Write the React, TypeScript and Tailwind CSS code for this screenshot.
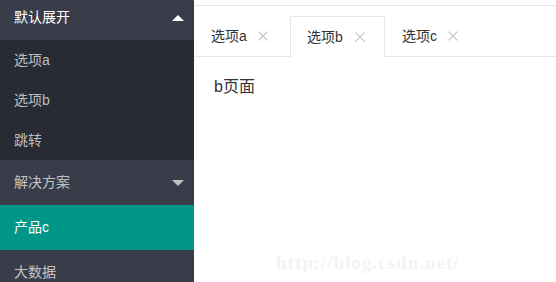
import React from 'react';

const FONT = { fontFamily: '"Liberation Sans", "Noto Sans CJK SC", sans-serif' };

const SUB_ITEMS = ['选项a', '选项b', '跳转'];
const TABS = [
  { id: 'a', label: '选项a' },
  { id: 'b', label: '选项b' },
  { id: 'c', label: '选项c' },
];

const CloseIcon: React.FC = () => (
  <svg width="10" height="10" viewBox="0 0 10 10" className="shrink-0">
    <path d="M0.5 0.5 L9.5 9.5 M9.5 0.5 L0.5 9.5" stroke="#c9c9c9" strokeWidth="1.2" fill="none" />
  </svg>
);

const Sidebar: React.FC = () => (
  <div className="w-[194px] shrink-0 bg-[#393D49] flex flex-col text-[14px] overflow-hidden">
    {/* expanded group */}
    <div className="-mt-[5px] h-[45px] shrink-0 flex items-center justify-between pl-[14px] pr-[10px] text-white">
      <span>默认展开</span>
      <span className="w-0 h-0 border-x-[6px] border-x-transparent border-b-[6px] border-b-white" />
    </div>
    <div className="bg-[#282B33]">
      {SUB_ITEMS.map(item => (
        <div key={item} className="h-[40px] flex items-center pl-[14px] text-white/70">{item}</div>
      ))}
    </div>

    {/* collapsed group */}
    <div className="h-[45px] shrink-0 flex items-center justify-between pl-[14px] pr-[10px] text-white/70">
      <span>解决方案</span>
      <span className="w-0 h-0 border-x-[6px] border-x-transparent border-t-[6px] border-t-[#c2c2c2]" />
    </div>
    <div className="h-[45px] shrink-0 flex items-center pl-[14px] bg-[#009688] text-white">产品c</div>
    <div className="h-[45px] shrink-0 flex items-center pl-[14px] text-white/70">大数据</div>
  </div>
);

const App: React.FC = () => {
  const active = 'b';

  return (
    <div className="w-[556px] h-[282px] flex bg-white overflow-hidden relative" style={FONT}>
      <Sidebar />

      <div className="flex-1 flex flex-col pt-[5px]">
        <div className="border-t border-[#e6e6e6]" />

        {/* Tab bar */}
        <div className="mt-[10px] h-[41px] flex border-b border-[#e6e6e6] text-[14px] text-[#333]">
          {TABS.map(tab =>
            tab.id === active ? (
              <div key={tab.id} className="w-[95px] h-[41px] -mb-px flex items-center gap-[12px] pl-[16px] bg-white border border-b-0 border-[#e6e6e6]">
                <span>{tab.label}</span>
                <CloseIcon />
              </div>
            ) : (
              <div key={tab.id} className="w-[96px] h-[40px] flex items-center gap-[11px] pl-[17px]">
                <span>{tab.label}</span>
                <CloseIcon />
              </div>
            )
          )}
        </div>

        {/* Tab content */}
        <div className="pl-[20px] pt-[20px] text-[16px] leading-[20px] text-[#333]">b页面</div>
      </div>

      {/* watermark */}
      <div
        className="absolute left-[276px] top-[249px] text-[19px] font-bold tracking-[1px] text-[#f3f3f3] pointer-events-none"
        style={{ fontFamily: '"Liberation Serif", serif' }}
      >
        http://blog.csdn.net/
      </div>
    </div>
  );
};

export default App;
